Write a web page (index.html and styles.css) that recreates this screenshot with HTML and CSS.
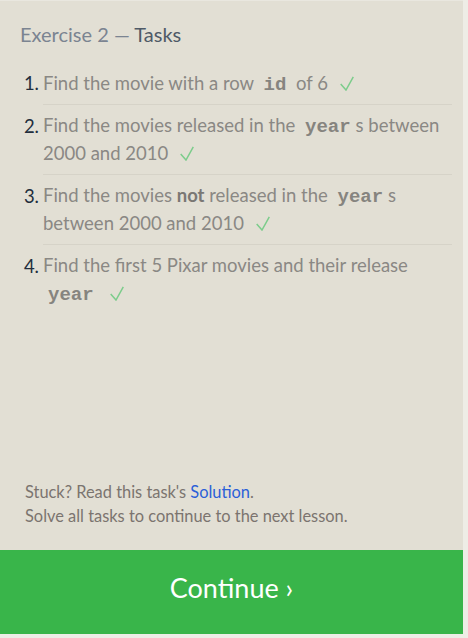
FILE: index.html
```html
<!DOCTYPE html>
<html>
<head>
<meta charset="utf-8">
<link rel="stylesheet" href="styles.css">
</head>
<body>
<div class="panel">
  <div class="content">
    <h2 class="title"><span class="pre">Exercise 2 —</span> <span class="strong">Tasks</span></h2>
    <ol class="tasks">
      <li class="task"><span class="num">1.</span><div class="body">Find the movie with a row <code>id</code> of 6 <svg class="check" viewBox="0 0 14 15" width="14" height="15"><polyline points="0.7,8 6,14 13.3,0.8"/></svg></div></li>
      <li class="task"><span class="num">2.</span><div class="body">Find the movies released in the <code>year</code>s between 2000 and 2010 <svg class="check" viewBox="0 0 14 15" width="14" height="15"><polyline points="0.7,8 6,14 13.3,0.8"/></svg></div></li>
      <li class="task"><span class="num">3.</span><div class="body">Find the movies <b>not</b> released in the <code>year</code>s between 2000 and 2010 <svg class="check" viewBox="0 0 14 15" width="14" height="15"><polyline points="0.7,8 6,14 13.3,0.8"/></svg></div></li>
      <li class="task last"><span class="num">4.</span><div class="body">Find the first 5 Pixar movies and their release <code>year</code> <svg class="check" viewBox="0 0 14 15" width="14" height="15"><polyline points="0.7,8 6,14 13.3,0.8"/></svg></div></li>
    </ol>
  </div>
  <div class="footer">
    <p>Stuck? Read this task's <a href="#">Solution</a>.</p>
    <p>Solve all tasks to continue to the next lesson.</p>
  </div>
  <div class="continue">Continue ›</div>
</div>
</body>
</html>
```
FILE: styles.css
```css
html, body {
  margin: 0;
  padding: 0;
}
body {
  background: #eeede6;
  font-family: Lato, "Open Sans", sans-serif;
}
.panel {
  width: 463px;
  height: 634px;
  background: #e2dfd4;
  display: flex;
  flex-direction: column;
  border-top: 1px solid #e9e7df;
  box-sizing: border-box;
}
.content {
  flex: 1;
}
.title {
  margin: 0;
  padding: 19px 0 0 20px;
  font-size: 20px;
  font-weight: 400;
  line-height: 28px;
}
.title .pre { color: #7b8491; }
.title .strong { color: #4f5a67; }
.tasks {
  list-style: none;
  margin: 14px 11px 0 0;
  padding: 0;
}
.task {
  display: flex;
  font-size: 18.5px;
  line-height: 28px;
}
.num {
  width: 43px;
  flex: none;
  box-sizing: border-box;
  padding: 7px 4px 0 0;
  text-align: right;
  color: #232e3d;
}
.body {
  flex: 1;
  padding: 7px 0 7px 0;
  color: #8a8884;
  border-bottom: 1px solid #d6d3c8;
}
.task:not(.last) + .task .body {
  padding-top: 6px;
}
.task.last .body {
  border-bottom: none;
}
.body b {
  color: #7a7874;
  font-weight: 700;
}
code {
  font-family: "Liberation Mono", monospace;
  font-weight: 700;
  font-size: 19px;
  line-height: 1;
  color: #86847f;
  padding: 0 5px;
}
.check {
  margin-left: 7px;
  vertical-align: -1px;
  fill: none;
  stroke: #7ccc8b;
  stroke-width: 1.5;
}
.footer {
  padding: 0 0 22px 25px;
  font-size: 16.4px;
  line-height: 24px;
  color: #7b746f;
}
.footer p {
  margin: 0;
}
.footer a {
  color: #2b5fd8;
  text-decoration: none;
}
.continue {
  height: 84px;
  box-sizing: border-box;
  padding-bottom: 10px;
  background: #39b54a;
  color: #ffffff;
  font-size: 27px;
  display: flex;
  align-items: center;
  justify-content: center;
}
```
